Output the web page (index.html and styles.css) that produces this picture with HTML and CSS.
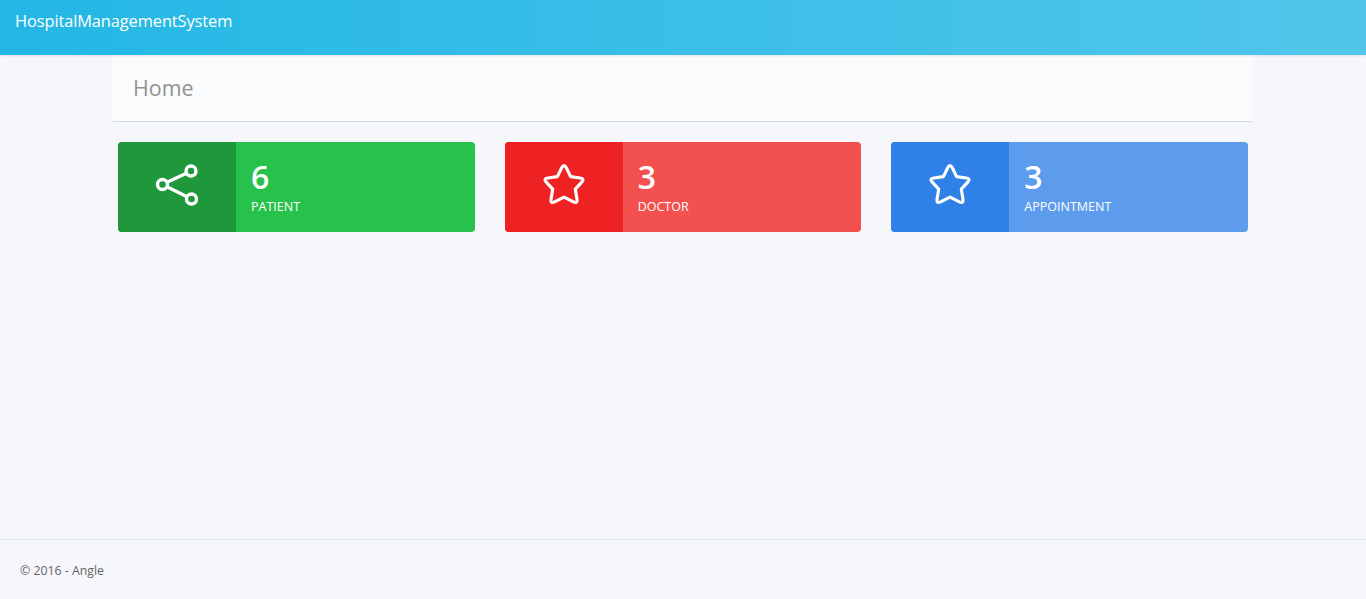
FILE: index.html
```html
<!DOCTYPE html>
<html lang="en">
<head>
<meta charset="utf-8">
<title>HospitalManagementSystem</title>
<link rel="stylesheet" href="styles.css">
</head>
<body>
<header class="topbar"><a class="brand" href="#">HospitalManagementSystem</a></header>
<main class="main">
  <h1 class="heading">Home</h1>
  <section class="cards">
    <article class="card card-green">
      <div class="card-icon">
        <svg class="icon share" viewBox="0 0 44 44" width="44" height="44"><circle cx="36" cy="8" r="5"/><circle cx="36.500" cy="36" r="5"/><circle cx="7.500" cy="21.500" r="5"/><path d="M12 19.300 31.500 10.300M12 23.700 32 33.800"/></svg>
      </div>
      <div class="card-body"><div class="count">6</div><div class="label">PATIENT</div></div>
    </article>
    <article class="card card-red">
      <div class="card-icon">
        <svg class="icon star" viewBox="0 0 44 44" width="46" height="46"><path d="M19.800 5.500Q22 1.500 24.200 5.500L28.300 14 37.500 15.300Q42 16 39 19.300L32.800 26 34.400 35.500Q35 40 31 38.200L22 33.600 13 38.200Q9 40 9.600 35.500L11.200 26 5 19.300Q2 16 6.500 15.300L15.700 14Z"/></svg>
      </div>
      <div class="card-body"><div class="count">3</div><div class="label">DOCTOR</div></div>
    </article>
    <article class="card card-blue">
      <div class="card-icon">
        <svg class="icon star" viewBox="0 0 44 44" width="46" height="46"><path d="M19.800 5.500Q22 1.500 24.200 5.500L28.300 14 37.500 15.300Q42 16 39 19.300L32.800 26 34.400 35.500Q35 40 31 38.200L22 33.600 13 38.200Q9 40 9.600 35.500L11.200 26 5 19.300Q2 16 6.500 15.300L15.700 14Z"/></svg>
      </div>
      <div class="card-body"><div class="count">3</div><div class="label">APPOINTMENT</div></div>
    </article>
  </section>
</main>
<footer class="footer">© 2016 - Angle</footer>
</body>
</html>
```
FILE: styles.css
```css
* { box-sizing: border-box; }
html, body { height: 100%; }
body {
  margin: 0;
  display: flex;
  flex-direction: column;
  background: #f5f7fa;
  font-family: "Open Sans", "Noto Sans", sans-serif;
  color: #656565;
  overflow: hidden;
}
.topbar {
  height: 55px;
  flex: none;
  padding: 10px 15px 0;
  background: linear-gradient(to right, #23b7e5, #51c6ea);
  box-shadow: 0 1px 3px rgba(0, 0, 0, 0.1);
  position: relative;
}
.brand {
  color: #fff;
  text-decoration: none;
  font-size: 16.4px;
  line-height: 21px;
  letter-spacing: -0.1px;
  font-weight: 500;
  display: block;
}
.main {
  flex: 1;
  width: 1140px;
  margin: 0 auto;
}
.heading {
  margin: 0;
  height: 67px;
  padding: 18px 20px 0;
  background: #fafbfc;
  border-bottom: 1px solid #cfdbe2;
  font-size: 21.4px;
  line-height: 30px;
  font-weight: 400;
  color: #929292;
}
.cards {
  display: grid;
  grid-template-columns: repeat(3, 1fr);
  gap: 30px;
  padding: 20px 5px 0;
}
.card {
  display: flex;
  height: 90px;
  border-radius: 4px;
  overflow: hidden;
  color: #fff;
}
.card-icon {
  width: 118px;
  flex: none;
  display: flex;
  align-items: center;
  justify-content: center;
}
.icon {
  display: block;
  fill: none;
  stroke: #fff;
  stroke-linejoin: round;
}
.share {
  stroke-width: 3.4;
  margin-bottom: 4px;
}
.star {
  stroke-width: 3;
  margin-bottom: 5px;
}
.card-body { flex: 1; padding: 15px 15px 0; }
.count {
  font-size: 32px;
  line-height: 40px;
  font-weight: 600;
}
.label {
  font-size: 12.5px;
  line-height: 16px;
  font-weight: 500;
  margin-top: 2px;
}
.card-green { background: #27c24c; }
.card-green .card-icon { background: #1e983b; }
.card-red { background: #f35050; }
.card-red .card-icon { background: #ee2222; }
.card-blue { background: #5d9cec; }
.card-blue .card-icon { background: #2f80e7; }
.footer {
  height: 60px;
  flex: none;
  padding: 21px 20px 0;
  border-top: 1px solid #e4eaec;
  font-size: 12.3px;
  line-height: 20px;
}
```
